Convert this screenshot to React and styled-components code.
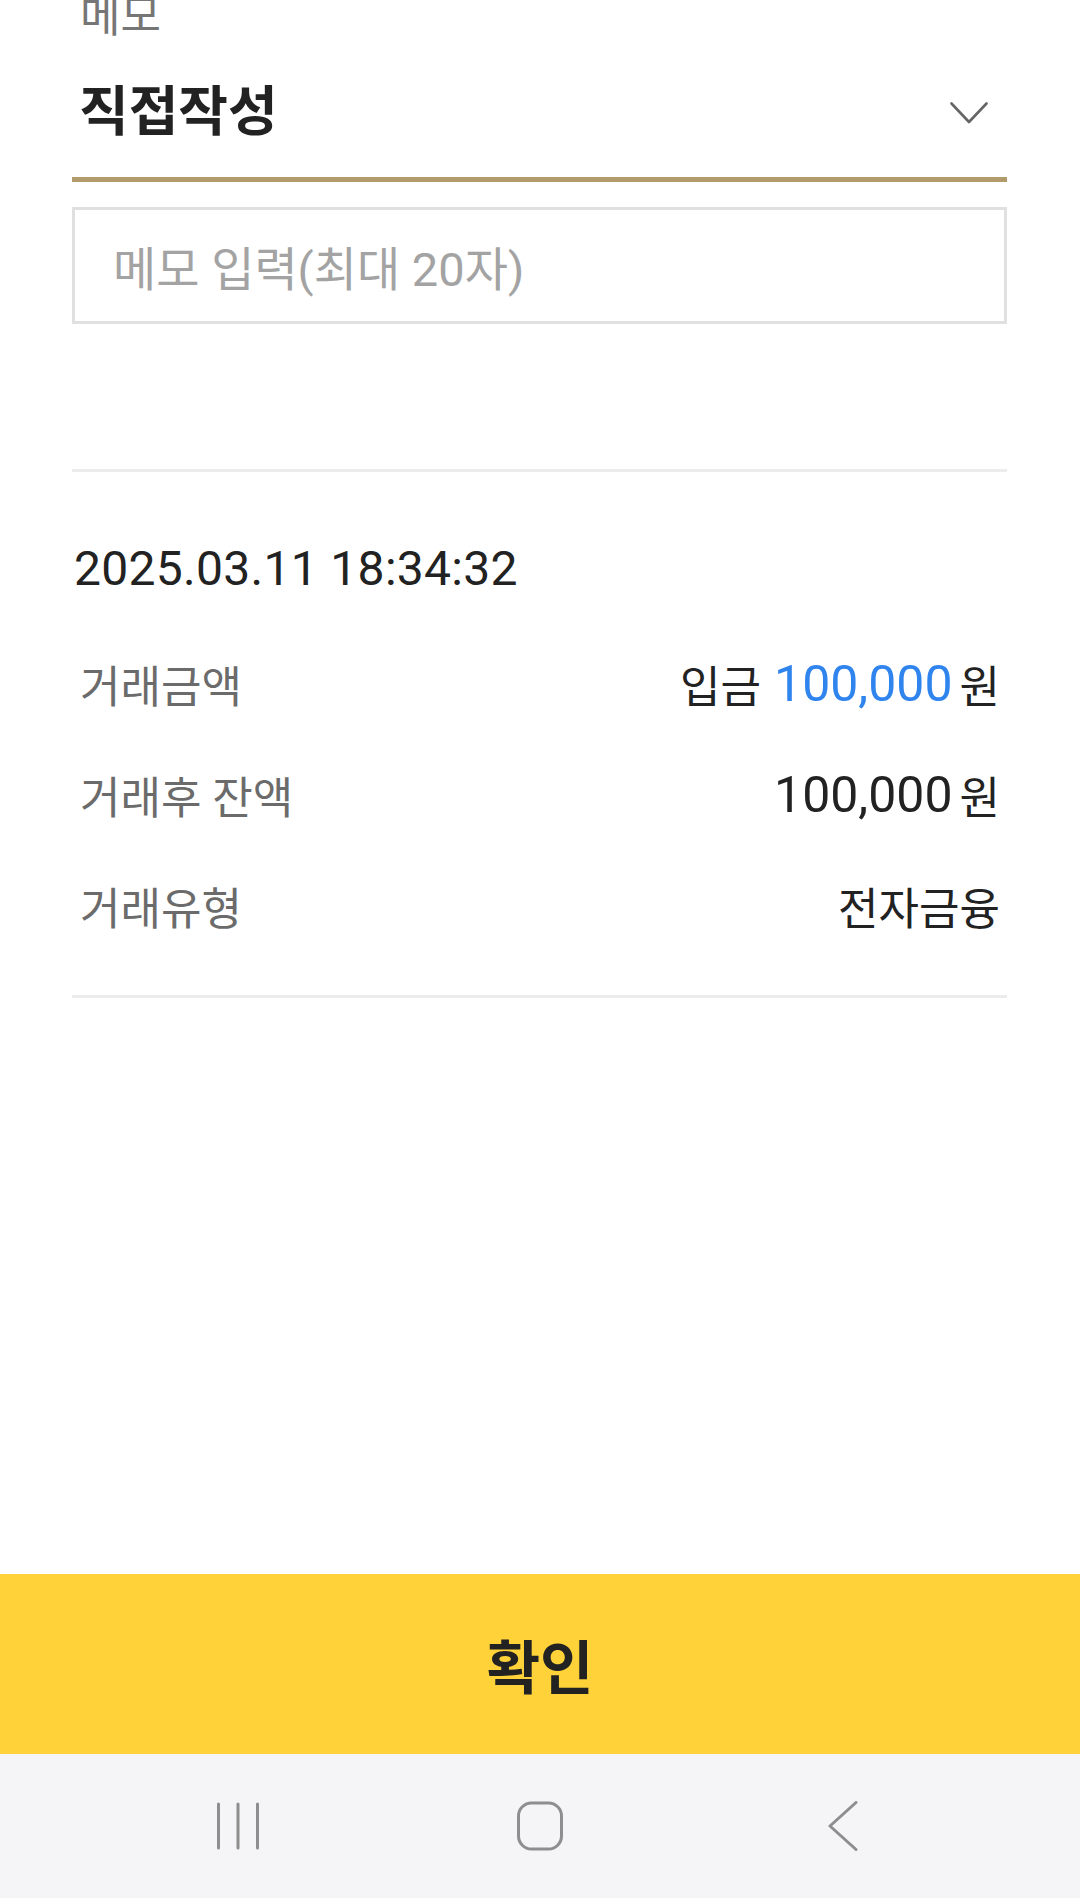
import styled, { createGlobalStyle } from "styled-components";

const SANS = `"Roboto", "Noto Sans CJK KR", sans-serif`;

const GlobalStyle = createGlobalStyle`
  html, body {
    margin: 0;
    padding: 0;
    background: #ffffff;
  }
  body {
    font-family: ${SANS};
    color: #222222;
  }
  * {
    box-sizing: border-box;
  }
`;

export default function App() {
  return (
    <>
      <GlobalStyle />
      <Screen>
        <Content>
          <FieldLabel>메모</FieldLabel>
          <Select>
            <SelectValue>직접작성</SelectValue>
            <Chevron viewBox="0 0 38 22" aria-hidden="true">
              <path d="M1.5 1.5 L19 20 L36.5 1.5" />
            </Chevron>
          </Select>
          <MemoInput>메모 입력(최대 20자)</MemoInput>

          <Divider $top={145} />

          <DateText>2025.03.11 18:34:32</DateText>

          <Rows>
            <Row>
              <RowLabel>거래금액</RowLabel>
              <RowValue>
                입금
                <Amount $blue>100,000</Amount>
                <Won>원</Won>
              </RowValue>
            </Row>
            <Row>
              <RowLabel>거래후 잔액</RowLabel>
              <RowValue>
                <Amount>100,000</Amount>
                <Won>원</Won>
              </RowValue>
            </Row>
            <Row>
              <RowLabel>거래유형</RowLabel>
              <RowValue>전자금융</RowValue>
            </Row>
          </Rows>

          <Divider $top={34} />
        </Content>

        <ConfirmButton type="button">확인</ConfirmButton>

        <NavBar>
          <NavItem>
            <NavIcon viewBox="0 0 46 50" aria-hidden="true">
              <path d="M3.5 3 V47 M23 3 V47 M42.5 3 V47" />
            </NavIcon>
          </NavItem>
          <NavItem>
            <NavIcon viewBox="0 0 46 50" aria-hidden="true">
              <rect x="1.5" y="2" width="43" height="46" rx="13" />
            </NavIcon>
          </NavItem>
          <NavItem>
            <NavIcon viewBox="0 0 46 50" aria-hidden="true">
              <path d="M37 1.5 L11 25 L37 48.5" />
            </NavIcon>
          </NavItem>
        </NavBar>
      </Screen>
    </>
  );
}

const Screen = styled.div`
  width: 1080px;
  height: 1898px;
  display: flex;
  flex-direction: column;
  overflow: hidden;
  background: #ffffff;
`;

const Content = styled.div`
  flex: 1;
  display: flex;
  flex-direction: column;
  padding: 0 73px 0 72px;
  margin-top: -7px;
`;

const FieldLabel = styled.div`
  font-family: ${SANS};
  font-size: 44px;
  line-height: 48px;
  color: #767676;
  padding-left: 8px;
`;

const Select = styled.div`
  height: 141px;
  padding: 8px 19px 0 7px;
  display: flex;
  align-items: center;
  justify-content: space-between;
  border-bottom: 5px solid #b29b6b;
`;

const SelectValue = styled.div`
  font-family: ${SANS};
  font-size: 54px;
  font-weight: 700;
  color: #222222;
  line-height: 64px;
`;

const Chevron = styled.svg`
  width: 38px;
  height: 22px;
  fill: none;
  stroke: #666666;
  stroke-width: 2.6;
  stroke-linecap: round;
  stroke-linejoin: round;
`;

const MemoInput = styled.div`
  margin-top: 25px;
  height: 117px;
  border: 3px solid #e0e0e0;
  padding-left: 38px;
  display: flex;
  align-items: center;
  font-family: ${SANS};
  font-size: 47px;
  color: #a3a3a3;
`;

const Divider = styled.div`
  margin-top: ${(p) => p.$top}px;
  height: 3px;
  background: #ececec;
`;

const DateText = styled.div`
  margin-top: 67px;
  padding-left: 2px;
  font-family: ${SANS};
  font-size: 48px;
  line-height: 60px;
  color: #222222;
  letter-spacing: 0.3px;
`;

const Rows = styled.div`
  margin-top: 29px;
  display: flex;
  flex-direction: column;
  padding: 0 7px 0 8px;
`;

const Row = styled.div`
  height: 111px;
  display: flex;
  align-items: center;
  justify-content: space-between;
`;

const RowLabel = styled.div`
  font-family: ${SANS};
  font-size: 44px;
  color: #6b6b6b;
`;

const RowValue = styled.div`
  display: flex;
  align-items: center;
  font-family: ${SANS};
  font-size: 44px;
  color: #222222;
`;

const Amount = styled.span`
  font-family: "Roboto", sans-serif;
  font-size: 50px;
  margin-left: 13px;
  color: ${(p) => (p.$blue ? "#2f84ee" : "#222222")};
`;

const Won = styled.span`
  margin-left: 7px;
`;

const ConfirmButton = styled.button`
  flex: 0 0 180px;
  width: 100%;
  border: none;
  margin: 0;
  padding: 0;
  background: #fed238;
  font-family: ${SANS};
  font-size: 58px;
  font-weight: 700;
  color: #222222;
  display: flex;
  align-items: center;
  justify-content: center;
`;

const NavBar = styled.div`
  flex: 0 0 144px;
  background: #f5f5f7;
  display: grid;
  grid-template-columns: repeat(3, 302px);
  justify-content: center;
  align-items: center;
`;

const NavItem = styled.div`
  display: flex;
  justify-content: center;
  align-items: center;
`;

const NavIcon = styled.svg`
  width: 46px;
  height: 50px;
  fill: none;
  stroke: #8e8e8e;
  stroke-width: 3;
  stroke-linecap: round;
  stroke-linejoin: round;
`;
